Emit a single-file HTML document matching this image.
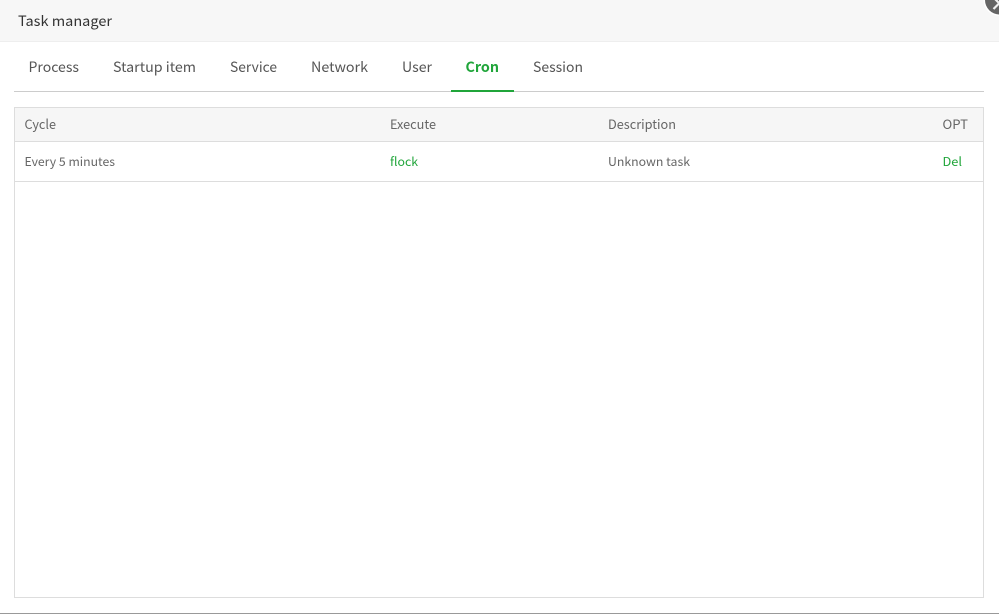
<!DOCTYPE html>
<html><head><meta charset="utf-8"><style>
html,body{margin:0;padding:0;background:#fff;width:999px;height:614px;overflow:hidden}
svg{display:block;position:absolute;left:0;top:0}
text{font-family:"Noto Sans CJK SC","Liberation Sans",sans-serif;fill:#666}
</style></head><body>
<svg width="999" height="614" viewBox="0 0 999 614" xmlns="http://www.w3.org/2000/svg">
<rect width="999" height="614" fill="#fff"/>
<rect width="999" height="41" fill="#f7f7f7"/>
<rect y="41" width="999" height="1" fill="#eee"/>
<text x="18" y="26" font-size="14" textLength="94" lengthAdjust="spacingAndGlyphs" style="fill:#333">Task manager</text>
<circle cx="999.5" cy="0" r="16" fill="#fff"/>
<circle cx="999.5" cy="0" r="14.5" fill="#666"/>
<path d="M993.5 9L1002 0.5M995 -1L1003 7" stroke="#f2f2f2" stroke-width="2.2" fill="none"/>
<g font-size="14">
<text x="28.5" y="72" textLength="50.5" lengthAdjust="spacingAndGlyphs" style="fill:#555">Process</text>
<text x="113" y="72" textLength="83" lengthAdjust="spacingAndGlyphs" style="fill:#555">Startup item</text>
<text x="230" y="72" textLength="47" lengthAdjust="spacingAndGlyphs" style="fill:#555">Service</text>
<text x="311" y="72" textLength="57" lengthAdjust="spacingAndGlyphs" style="fill:#555">Network</text>
<text x="402" y="72" textLength="30" lengthAdjust="spacingAndGlyphs" style="fill:#555">User</text>
<text x="465.5" y="72" textLength="33.5" lengthAdjust="spacingAndGlyphs" font-weight="700" style="fill:#20a53a">Cron</text>
<text x="533" y="72" textLength="50" lengthAdjust="spacingAndGlyphs" style="fill:#555">Session</text>
</g>
<rect x="14" y="91" width="970" height="1" fill="#ccc"/>
<rect x="451" y="90" width="63" height="2" fill="#20a53a"/>
<rect x="14" y="107" width="970" height="34" fill="#f6f6f6"/>
<rect x="14.5" y="107.5" width="969" height="490" fill="none" stroke="#ddd"/>
<rect x="15" y="141" width="968" height="1" fill="#ddd"/>
<rect x="15" y="181" width="968" height="1" fill="#ddd"/>
<g font-size="13">
<text x="24.5" y="129" textLength="31.5" lengthAdjust="spacingAndGlyphs">Cycle</text>
<text x="390" y="129" textLength="46" lengthAdjust="spacingAndGlyphs">Execute</text>
<text x="608" y="129" textLength="68" lengthAdjust="spacingAndGlyphs">Description</text>
<text x="942.5" y="129" textLength="25.5" lengthAdjust="spacingAndGlyphs">OPT</text>
</g>
<g font-size="12">
<text x="24.5" y="166" textLength="90.5" lengthAdjust="spacingAndGlyphs">Every 5 minutes</text>
<text x="390" y="166" textLength="28" lengthAdjust="spacingAndGlyphs" style="fill:#20a53a">flock</text>
<text x="608" y="166" textLength="82" lengthAdjust="spacingAndGlyphs">Unknown task</text>
<text x="942.5" y="166" textLength="19.5" lengthAdjust="spacingAndGlyphs" style="fill:#20a53a">Del</text>
</g>
<rect y="613" width="999" height="1" fill="#999"/>
</svg>
</body></html>
